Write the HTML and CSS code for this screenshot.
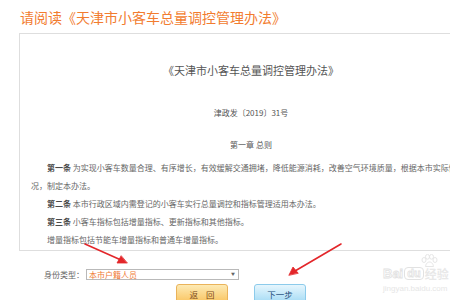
FILE: index.html
```html
<!DOCTYPE html>
<html lang="zh-CN">
<head>
<meta charset="utf-8">
<title>请阅读</title>
<link rel="stylesheet" href="styles.css">
</head>
<body>
<div class="page">
  <h1 class="title">请阅读《天津市小客车总量调控管理办法》</h1>
  <div class="doc">
    <h2 class="doc-title">《天津市小客车总量调控管理办法》</h2>
    <div class="doc-no">津政发〔2019〕31号</div>
    <div class="chapter">第一章 总则</div>
    <p class="para first"><b>第一条</b> 为实现小客车数量合理、有序增长，有效缓解交通拥堵，降低能源消耗，改善空气环境质量，根据本市实际情况，制定本办法。</p>
    <p class="para"><b>第二条</b> 本市行政区域内需登记的小客车实行总量调控和指标管理适用本办法。</p>
    <p class="para"><b>第三条</b> 小客车指标包括增量指标、更新指标和其他指标。</p>
    <p class="para">增量指标包括节能车增量指标和普通车增量指标。</p>
  </div>
  <div class="form-row">
    <span class="label">身份类型：</span>
    <div class="select"><span class="select-text">本市户籍人员</span><span class="select-arrow">▼</span></div>
  </div>
  <div class="buttons">
    <button class="btn btn-back">返 回</button>
    <button class="btn btn-next">下一步</button>
  </div>

  <svg class="arrows" width="450" height="300" viewBox="0 0 450 300">
    <g stroke="#e3262a" stroke-width="1.6" fill="#e3262a" stroke-linecap="round">
      <line x1="85" y1="244" x2="121" y2="260"/>
      <polygon points="127,263 117,263 121,256" stroke-width="0.8"/>
      <line x1="341" y1="244" x2="295" y2="271"/>
      <polygon points="289,275 293,267 298,273" stroke-width="0.8"/>
    </g>
  </svg>

  <div class="watermark">
    <svg class="paw" width="18" height="14" viewBox="0 0 18 14">
      <g fill="none" stroke="#e6e6e6" stroke-width="1">
        <ellipse cx="4" cy="6" rx="2" ry="2.5"/>
        <ellipse cx="7.5" cy="2.8" rx="2" ry="2.4"/>
        <ellipse cx="11.5" cy="2.8" rx="2" ry="2.4"/>
        <ellipse cx="15" cy="6" rx="2" ry="2.5"/>
        <path d="M5.5 12.5 C6 9 8 8 9.5 8 C11 8 13 9 13.5 12.5 Z"/>
      </g>
    </svg>
    <div class="wm-brand"><span class="wm-bai">Bai</span><span class="wm-du">du</span><span class="wm-jy">经验</span></div>
    <div class="wm-url">jingyan.baidu.com</div>
  </div>
</div>
</body>
</html>
```

FILE: styles.css
```css
html, body {
  margin: 0;
  padding: 0;
  overflow: hidden;
  background: #ffffff;
}

.page {
  position: relative;
  width: 450px;
  height: 300px;
  overflow: hidden;
  font-family: "Noto Sans CJK SC", "Liberation Sans", sans-serif;
}

.title {
  margin: 0;
  padding: 8px 0 0 20px;
  height: 18px;
  font-size: 14px;
  line-height: 18px;
  font-weight: normal;
  color: #f27c2f;
  margin-bottom: 7px;
  white-space: nowrap;
}

.doc {
  margin-left: 19px;
  width: 440px;
  padding: 0 0 1px 11px;
  border: 1px solid #dedede;
  border-right: none;
  color: #666;
  height: 215px;
  box-sizing: content-box;
}

.doc-title {
  margin: 0;
  padding-top: 29px;
  font-size: 11px;
  line-height: 14px;
  font-weight: normal;
  text-align: center;
  color: #555;
}

.doc-no {
  margin-top: 30px;
  font-size: 8px;
  line-height: 12px;
  text-align: center;
  color: #555;
}

.chapter {
  margin-top: 20px;
  font-size: 8px;
  line-height: 12px;
  text-align: center;
  color: #555;
}

.para {
  margin: 0;
  padding-right: 12px;
  font-size: 8px;
  line-height: 18px;
  text-indent: 2em;
  color: #666;
}

.para.first {
  margin-top: 7.5px;
}

.para b {
  color: #4a4a4a;
  font-weight: bold;
}

.form-row {
  display: flex;
  align-items: center;
  margin: 18px 0 0 44px;
  height: 11px;
}

.label {
  font-size: 8px;
  line-height: 11px;
  color: #666;
  width: 42px;
  white-space: nowrap;
}

.select {
  display: flex;
  align-items: center;
  justify-content: space-between;
  width: 146px;
  height: 9px;
  padding: 0 3px 0 2px;
  border: 1px solid #b9b9b9;
  background: #fff;
}

.select-text {
  font-size: 8px;
  line-height: 9px;
  color: #f07a35;
}

.select-arrow {
  font-size: 4px;
  line-height: 9px;
  color: #666;
}

.buttons {
  display: flex;
  gap: 26px;
  margin: 4px 0 0 176px;
}

.btn {
  width: 52px;
  height: 20px;
  padding: 0;
  border-radius: 3px;
  font-family: "Noto Sans CJK SC", sans-serif;
  font-size: 8.5px;
  line-height: 18px;
  font-weight: normal;
  text-align: center;
}

.btn-back {
  background: linear-gradient(#fdeab4, #f9c35e);
  border: 1px solid #eab35a;
  color: #7e4a1a;
  letter-spacing: 3px;
  text-indent: 3px;
}

.btn-next {
  background: linear-gradient(#e6f6fd, #a3daf4);
  border: 1px solid #8ccbeb;
  color: #234c78;
}

.arrows {
  position: absolute;
  left: 0;
  top: 0;
  pointer-events: none;
}

.watermark {
  position: absolute;
  left: 383px;
  top: 254px;
  width: 80px;
  color: #e4e4e4;
}

.paw {
  position: absolute;
  left: 37px;
  top: 0;
}

.wm-brand {
  position: absolute;
  left: 0;
  top: 13px;
  display: flex;
  align-items: center;
  gap: 1px;
  font-family: "Liberation Sans", sans-serif;
  font-size: 13px;
  line-height: 13px;
  font-weight: bold;
  white-space: nowrap;
}

.wm-bai {
  color: #fff;
  -webkit-text-stroke: 0.8px #e2e2e2;
}

.wm-du {
  padding: 0 2px;
  border: 1px solid #e2e2e2;
  border-radius: 4px;
  color: #fff;
  -webkit-text-stroke: 0.8px #e2e2e2;
  font-size: 11px;
  line-height: 11px;
}

.wm-jy {
  font-family: "Noto Sans CJK SC", sans-serif;
  font-size: 12px;
  color: #e8e8e8;
}

.wm-url {
  position: absolute;
  left: 0;
  top: 30px;
  font-family: "Liberation Sans", sans-serif;
  font-size: 8px;
  line-height: 9px;
  color: #e6e6e6;
  white-space: nowrap;
}
```
